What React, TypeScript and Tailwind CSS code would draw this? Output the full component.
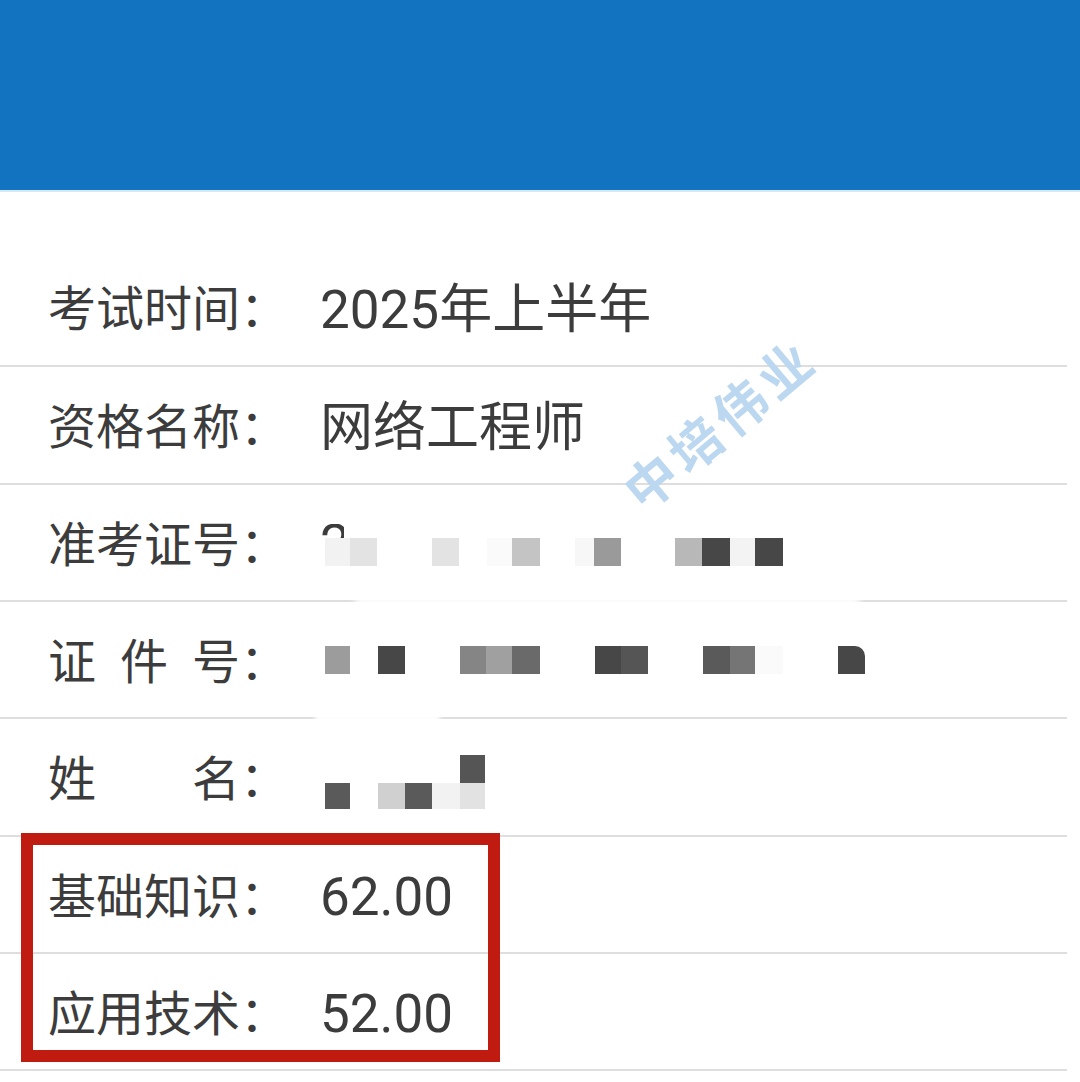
type Cell = { x: number; y: number; w: number; h: number; c: string; r?: string };

const rows: { label: string[]; value?: string }[] = [
  { label: ['考试时间'], value: '2025年上半年' },
  { label: ['资格名称'], value: '网络工程师' },
  { label: ['准考证号'] },
  { label: ['证', '件', '号'] },
  { label: ['姓', '名'] },
  { label: ['基础知识'], value: '62.00' },
  { label: ['应用技术'], value: '52.00' },
];

// row heights incl. the 2px divider
const heights = ['h-[118px]', 'h-[118px]', 'h-[117px]', 'h-[117px]', 'h-[118px]', 'h-[117px]', 'h-[117px]'];

// pixelated redaction cells, relative to the value column / row top
const mosaic: Record<number, Cell[]> = {
  2: [
    { x: 5, y: 53, w: 25, h: 28, c: 'bg-[#f2f2f2]' },
    { x: 30, y: 53, w: 27, h: 28, c: 'bg-[#e3e3e3]' },
    { x: 112, y: 53, w: 27, h: 28, c: 'bg-[#e3e3e3]' },
    { x: 167, y: 53, w: 25, h: 28, c: 'bg-[#fafafa]' },
    { x: 192, y: 53, w: 28, h: 28, c: 'bg-[#c4c4c4]' },
    { x: 255, y: 53, w: 19, h: 28, c: 'bg-[#f7f7f7]' },
    { x: 274, y: 53, w: 27, h: 28, c: 'bg-[#9a9a9a]' },
    { x: 355, y: 53, w: 27, h: 28, c: 'bg-[#b8b8b8]' },
    { x: 382, y: 53, w: 28, h: 28, c: 'bg-[#474747]' },
    { x: 410, y: 53, w: 25, h: 28, c: 'bg-[#f3f3f3]' },
    { x: 435, y: 53, w: 28, h: 28, c: 'bg-[#474747]' },
  ],
  3: [
    { x: 5, y: 44, w: 25, h: 28, c: 'bg-[#9c9c9c]' },
    { x: 58, y: 44, w: 27, h: 28, c: 'bg-[#474747]' },
    { x: 140, y: 44, w: 26, h: 28, c: 'bg-[#858585]' },
    { x: 166, y: 44, w: 26, h: 28, c: 'bg-[#a0a0a0]' },
    { x: 192, y: 44, w: 28, h: 28, c: 'bg-[#6a6a6a]' },
    { x: 275, y: 44, w: 26, h: 28, c: 'bg-[#474747]' },
    { x: 301, y: 44, w: 27, h: 28, c: 'bg-[#555555]' },
    { x: 383, y: 44, w: 27, h: 28, c: 'bg-[#5a5a5a]' },
    { x: 410, y: 44, w: 25, h: 28, c: 'bg-[#757575]' },
    { x: 435, y: 44, w: 28, h: 28, c: 'bg-[#fafafa]' },
    { x: 518, y: 44, w: 27, h: 28, c: 'bg-[#474747]', r: 'rounded-tr-[10px]' },
  ],
  4: [
    { x: 5, y: 64, w: 25, h: 26, c: 'bg-[#5a5a5a]' },
    { x: 58, y: 64, w: 27, h: 26, c: 'bg-[#d0d0d0]' },
    { x: 85, y: 64, w: 27, h: 26, c: 'bg-[#5a5a5a]' },
    { x: 112, y: 64, w: 28, h: 26, c: 'bg-[#f2f2f2]' },
    { x: 140, y: 36, w: 25, h: 28, c: 'bg-[#555555]' },
    { x: 140, y: 64, w: 25, h: 26, c: 'bg-[#e2e2e2]' },
  ],
};

function Label({ parts }: { parts: string[] }) {
  return (
    <div className="w-[320px] shrink-0 pl-[48px] pt-[6px] flex items-center text-[48px] leading-none whitespace-nowrap">
      <div className={parts.length > 1 ? 'w-[192px] flex justify-between' : 'flex'}>
        {parts.map((p) => (
          <span key={p}>{p}</span>
        ))}
      </div>
      <span>：</span>
    </div>
  );
}

export default function App() {
  return (
    <div className="w-[1080px] h-[1082px] bg-white relative overflow-hidden text-[#3c3c3c] font-[family-name:Roboto,'Noto_Sans_CJK_SC',sans-serif]">
      <header className="h-[192px] bg-[#1273c0] border-b-2 border-[#d3e9f6]" />

      <div className="pt-[57px]">
        {rows.map((row, i) => (
          <div key={i} className={`${heights[i]} w-[1067px] flex items-center border-b-2 border-[#dedede]`}>
            <Label parts={row.label} />
            <div className="relative flex-1 h-full flex items-center pt-[6px] text-[53px] leading-none whitespace-nowrap">
              {row.value && <span>{row.value}</span>}
              {i === 2 && (
                <div className="absolute left-[0px] top-[39px] h-[14px] w-[24px] overflow-hidden">
                  <span className="block mt-[-6px] text-[53px] leading-none">2</span>
                </div>
              )}
              {(mosaic[i] || []).map((m, k) => (
                <div
                  key={k}
                  className={`absolute ${m.c} ${m.r || ''}`}
                  style={{ left: m.x, top: m.y, width: m.w, height: m.h }}
                />
              ))}
            </div>
          </div>
        ))}
      </div>

      {/* smudges left by the redaction */}
      <div className="absolute left-[355px] top-[596px] w-[505px] h-[18px] bg-white/90 blur-[3px]" />
      <div className="absolute left-[315px] top-[715px] w-[125px] h-[10px] bg-white blur-[2px]" />

      {/* watermark */}
      <div className="absolute left-[722px] top-[426px] -translate-x-1/2 -translate-y-1/2 -rotate-[40deg] whitespace-nowrap text-[52px] leading-none font-bold tracking-[6px] text-[#bcd8f1]">
        中培伟业
      </div>

      {/* highlight box */}
      <div className="absolute left-[21px] top-[833px] w-[479px] h-[229px] border-[12px] border-[#bf1b10]" />
    </div>
  );
}
